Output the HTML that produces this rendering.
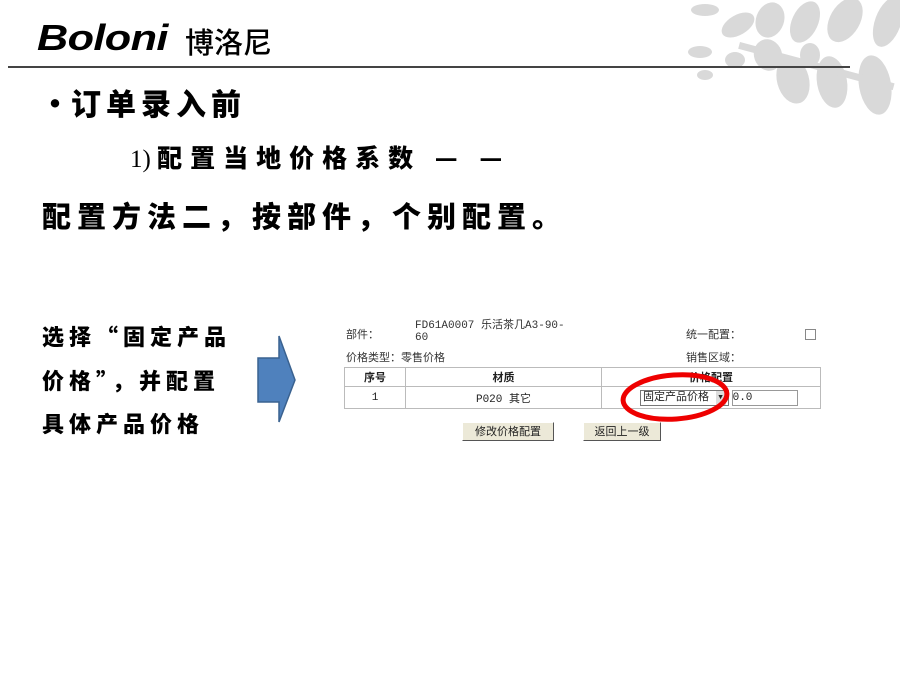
<!DOCTYPE html>
<html><head><meta charset="utf-8"><style>
body{margin:0;width:900px;height:675px;background:#fff;position:relative;overflow:hidden;font-family:"Liberation Sans","Noto Sans CJK SC",sans-serif}
.a{position:absolute;white-space:nowrap}
.h{font-family:"Noto Sans CJK SC",sans-serif;font-weight:900;color:#000}
.s{font-family:"Liberation Mono","Noto Sans CJK SC",monospace;font-size:11px;color:#333}
.btn{position:absolute;height:17px;background:#ece9d8;border:1px solid #fff;border-right-color:#555;border-bottom-color:#555;font-size:11px;text-align:center;line-height:17px;color:#222;font-family:"Noto Sans CJK SC",sans-serif}
</style></head><body>
<svg class="a" style="left:0;top:0" width="900" height="130">
<g fill="#d9d9d9">
<ellipse cx="700" cy="52" rx="12" ry="6"/><ellipse cx="705" cy="10" rx="14" ry="6"/>
<ellipse cx="738" cy="25" rx="18" ry="10" transform="rotate(-30 738 25)"/>
<ellipse cx="705" cy="75" rx="8" ry="5"/>
<ellipse cx="735" cy="60" rx="10" ry="8"/>
<ellipse cx="770" cy="20" rx="14" ry="18" transform="rotate(20 770 20)"/>
<ellipse cx="768" cy="55" rx="14" ry="16" transform="rotate(-20 768 55)"/>
<ellipse cx="805" cy="22" rx="13" ry="22" transform="rotate(25 805 22)"/>
<ellipse cx="793" cy="80" rx="16" ry="24" transform="rotate(-15 793 80)"/>
<ellipse cx="832" cy="82" rx="15" ry="26" transform="rotate(-10 832 82)"/>
<ellipse cx="845" cy="20" rx="15" ry="24" transform="rotate(30 845 20)"/>
<ellipse cx="875" cy="85" rx="16" ry="30" transform="rotate(-10 875 85)"/>
<ellipse cx="888" cy="22" rx="13" ry="26" transform="rotate(20 888 22)"/>
<ellipse cx="810" cy="55" rx="10" ry="12"/>
<rect x="740" y="42" width="160" height="7" transform="rotate(15 740 42)"/>
</g>
<line x1="8" y1="67" x2="850" y2="67" stroke="#444" stroke-width="2"/>
</svg>
<div class="a" style="left:37px;top:17px;font:italic 900 36px 'Liberation Sans',sans-serif;letter-spacing:-0.5px;transform:scaleX(1.2);transform-origin:left">Boloni</div>
<div class="a" style="left:185px;top:20px;font-size:29px;font-weight:500;font-family:'Noto Sans CJK SC',sans-serif">博洛尼</div>
<div class="a h" style="left:40px;top:80px;font-size:30px;letter-spacing:5px">•<span style="margin-left:-4px">订单录入前</span></div>
<div class="a h" style="left:130px;top:139px;font-size:25px;letter-spacing:8px"><span style="font-family:'Liberation Serif';font-weight:400;letter-spacing:0">1) </span>配置当地价格系数 — —</div>
<div class="a h" style="left:42px;top:194px;font-size:29px;letter-spacing:6px">配置方法二，按部件，个别配置。</div>
<div class="a h" style="left:42px;top:320px;font-size:22px;letter-spacing:5px">选择“固定产品</div>
<div class="a h" style="left:42px;top:364px;font-size:22px;letter-spacing:5px">价格”，并配置</div>
<div class="a h" style="left:42px;top:407px;font-size:22px;letter-spacing:5px">具体产品价格</div>
<svg class="a" style="left:255px;top:334px" width="45" height="92"><path d="M3 24H24V2L40 46L24 88V68H3Z" fill="#4f81bd" stroke="#3a6290" stroke-width="1.5"/></svg>
<div class="a s" style="left:346px;top:326px">部件：</div>
<div class="a s" style="left:415px;top:320px;line-height:12px">FD61A0007 乐活茶几A3-90-<br>60</div>
<div class="a s" style="left:686px;top:326px">统一配置：</div>
<div class="a" style="left:805px;top:329px;width:9px;height:9px;border:1px solid #888"></div>
<div class="a s" style="left:346px;top:349px">价格类型：零售价格</div>
<div class="a s" style="left:686px;top:349px">销售区域：</div>
<table class="a s" style="left:344px;top:367px;width:477px;border-collapse:collapse;text-align:center;color:#222">
<tr style="height:19px"><td style="border:1px solid #bbb;width:58px;font-weight:bold">序号</td><td style="border:1px solid #bbb;width:193px;font-weight:bold">材质</td><td style="border:1px solid #bbb;font-weight:bold">价格配置</td></tr>
<tr style="height:22px"><td style="border:1px solid #bbb">1</td><td style="border:1px solid #bbb">P020 其它</td><td style="border:1px solid #bbb;text-align:left;padding-left:38px"><span style="display:inline-block;border:1px solid #777;padding:0 2px;height:14px;line-height:14px">固定产品价格 <span style="display:inline-block;background:#ddd;width:10px;text-align:center">▾</span></span><span style="display:inline-block;border:1px solid #999;width:64px;height:14px;line-height:14px;margin-left:3px">0.0</span></td></tr>
</table>
<svg class="a" style="left:615px;top:368px" width="120" height="58"><ellipse cx="60" cy="29" rx="52" ry="22" fill="none" stroke="#e00" stroke-width="5" transform="rotate(-4 60 29)"/></svg>
<div class="btn" style="left:462px;top:422px;width:90px">修改价格配置</div>
<div class="btn" style="left:583px;top:422px;width:76px">返回上一级</div>
</body></html>
